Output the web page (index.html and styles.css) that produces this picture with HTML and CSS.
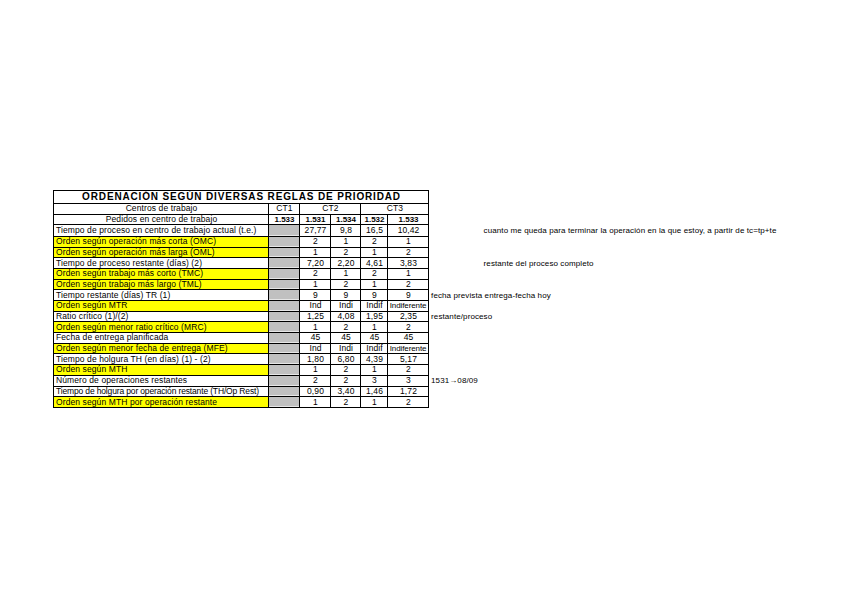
FILE: index.html
```html
<!DOCTYPE html>
<html lang="es">
<head>
<meta charset="utf-8">
<title>Ordenación según diversas reglas de prioridad</title>
<link rel="stylesheet" href="styles.css">
</head>
<body>
<div class="sheet">
<table class="grid">
<colgroup>
<col class="c-label"><col class="c-ct1"><col class="c-a"><col class="c-b"><col class="c-c"><col class="c-d"><col class="c-g"><col class="c-h">
</colgroup>
<tr class="title"><td class="ttl" colspan="6">ORDENACIÓN SEGÚN DIVERSAS REGLAS DE PRIORIDAD</td><td class="note"></td><td class="note"></td></tr>
<tr><td class="lbl ctr">Centros de trabajo</td><td class="v">CT1</td><td class="v" colspan="2">CT2</td><td class="v" colspan="2">CT3</td><td class="note"></td><td class="note"></td></tr>
<tr><td class="lbl ctr">Pedidos en centro de trabajo</td><td class="v hdn">1.533</td><td class="v hdn">1.531</td><td class="v hdn">1.534</td><td class="v hdn">1.532</td><td class="v hdn">1.533</td><td class="note"></td><td class="note"></td></tr>
<tr class="first"><td class="lbl">Tiempo de proceso en centro de trabajo actual (t.e.)</td><td class="gray"></td><td class="v">27,77</td><td class="v">9,8</td><td class="v">16,5</td><td class="v">10,42</td><td class="note"></td><td class="note">cuanto me queda para terminar la operación en la que estoy, a partir de tc=tp+te</td></tr>
<tr><td class="lbl y">Orden según operación más corta (OMC)</td><td class="gray"></td><td class="v">2</td><td class="v">1</td><td class="v">2</td><td class="v">1</td><td class="note"></td><td class="note"></td></tr>
<tr><td class="lbl y">Orden según operación más larga (OML)</td><td class="gray"></td><td class="v">1</td><td class="v">2</td><td class="v">1</td><td class="v">2</td><td class="note"></td><td class="note"></td></tr>
<tr><td class="lbl">Tiempo de proceso restante (días) (2)</td><td class="gray"></td><td class="v">7,20</td><td class="v">2,20</td><td class="v">4,61</td><td class="v">3,83</td><td class="note"></td><td class="note">restante del proceso completo</td></tr>
<tr><td class="lbl y">Orden según trabajo más corto (TMC)</td><td class="gray"></td><td class="v">2</td><td class="v">1</td><td class="v">2</td><td class="v">1</td><td class="note"></td><td class="note"></td></tr>
<tr><td class="lbl y">Orden según trabajo más largo (TML)</td><td class="gray"></td><td class="v">1</td><td class="v">2</td><td class="v">1</td><td class="v">2</td><td class="note"></td><td class="note"></td></tr>
<tr><td class="lbl">Tiempo restante (días) TR (1)</td><td class="gray"></td><td class="v">9</td><td class="v">9</td><td class="v">9</td><td class="v">9</td><td class="note">fecha prevista entrega-fecha hoy</td><td class="note"></td></tr>
<tr><td class="lbl y">Orden según MTR</td><td class="gray"></td><td class="v">Ind</td><td class="v">Indi</td><td class="v">Indif</td><td class="v tight">Indiferente</td><td class="note"></td><td class="note"></td></tr>
<tr><td class="lbl">Ratio crítico (1)/(2)</td><td class="gray"></td><td class="v">1,25</td><td class="v">4,08</td><td class="v">1,95</td><td class="v">2,35</td><td class="note">restante/proceso</td><td class="note"></td></tr>
<tr><td class="lbl y">Orden según menor ratio crítico (MRC)</td><td class="gray"></td><td class="v">1</td><td class="v">2</td><td class="v">1</td><td class="v">2</td><td class="note"></td><td class="note"></td></tr>
<tr><td class="lbl">Fecha de entrega planificada</td><td class="gray"></td><td class="v">45</td><td class="v">45</td><td class="v">45</td><td class="v">45</td><td class="note"></td><td class="note"></td></tr>
<tr><td class="lbl y">Orden según menor fecha de entrega (MFE)</td><td class="gray"></td><td class="v">Ind</td><td class="v">Indi</td><td class="v">Indif</td><td class="v tight">Indiferente</td><td class="note"></td><td class="note"></td></tr>
<tr><td class="lbl">Tiempo de holgura TH (en días) (1) - (2)</td><td class="gray"></td><td class="v">1,80</td><td class="v">6,80</td><td class="v">4,39</td><td class="v">5,17</td><td class="note"></td><td class="note"></td></tr>
<tr><td class="lbl y">Orden según MTH</td><td class="gray"></td><td class="v">1</td><td class="v">2</td><td class="v">1</td><td class="v">2</td><td class="note"></td><td class="note"></td></tr>
<tr><td class="lbl">Número de operaciones restantes</td><td class="gray"></td><td class="v">2</td><td class="v">2</td><td class="v">3</td><td class="v">3</td><td class="note">1531→08/09</td><td class="note"></td></tr>
<tr><td class="lbl snug">Tiempo de holgura por operación restante (TH/Op Rest)</td><td class="gray"></td><td class="v">0,90</td><td class="v">3,40</td><td class="v">1,46</td><td class="v">1,72</td><td class="note"></td><td class="note"></td></tr>
<tr><td class="lbl y">Orden según MTH por operación restante</td><td class="gray"></td><td class="v">1</td><td class="v">2</td><td class="v">1</td><td class="v">2</td><td class="note"></td><td class="note"></td></tr>
</table>
</div>
</body>
</html>
```

FILE: styles.css
```css
html, body {
  margin: 0;
  background: #ffffff;
}

body {
  font-family: "Liberation Sans", Arial, sans-serif;
  color: #000000;
}

.sheet {
  padding: 190px 0 0 53px;
}

.grid {
  border-collapse: collapse;
  table-layout: fixed;
  width: 728px;
}

.c-label { width: 215px; }
.c-ct1 { width: 31px; }
.c-a { width: 31px; }
.c-b { width: 30px; }
.c-c { width: 27px; }
.c-d { width: 41px; }
.c-g { width: 53px; }
.c-h { width: 300px; }

.grid td {
  padding: 0 1px 0 2px;
  height: 9.7px;
  font-size: 8.5px;
  line-height: 9px;
  letter-spacing: 0.1px;
  white-space: nowrap;
  overflow: visible;
  vertical-align: middle;
}

.grid td.ttl {
  border: 1.5px solid #000;
  text-align: center;
  font-weight: bold;
  font-size: 10px;
  line-height: 12px;
  letter-spacing: 0.85px;
  height: 11.5px;
}

.lbl {
  border: 1px solid #000;
  text-align: left;
  overflow: hidden;
}

.lbl.ctr {
  text-align: center;
}

.lbl.y {
  background: #ffff00;
}

.grid td.snug {
  padding-right: 0;
  letter-spacing: -0.15px;
}

.v {
  border: 1px solid #000;
  text-align: center;
  overflow: hidden;
}

.grid td.hdn {
  font-weight: bold;
  font-size: 8px;
  letter-spacing: 0;
}

.grid td.tight {
  padding: 0;
  font-size: 8px;
  letter-spacing: -0.1px;
}

.gray {
  border: 1px solid #000;
  background: #c0c0c0;
  box-shadow: inset 0 -1px 0 #e6e6e6;
}

.grid td.note {
  border: none;
  text-align: left;
  padding-left: 2px;
  font-size: 8px;
  letter-spacing: 0.1px;
}

.grid .first td {
  height: 10.5px;
}
```
